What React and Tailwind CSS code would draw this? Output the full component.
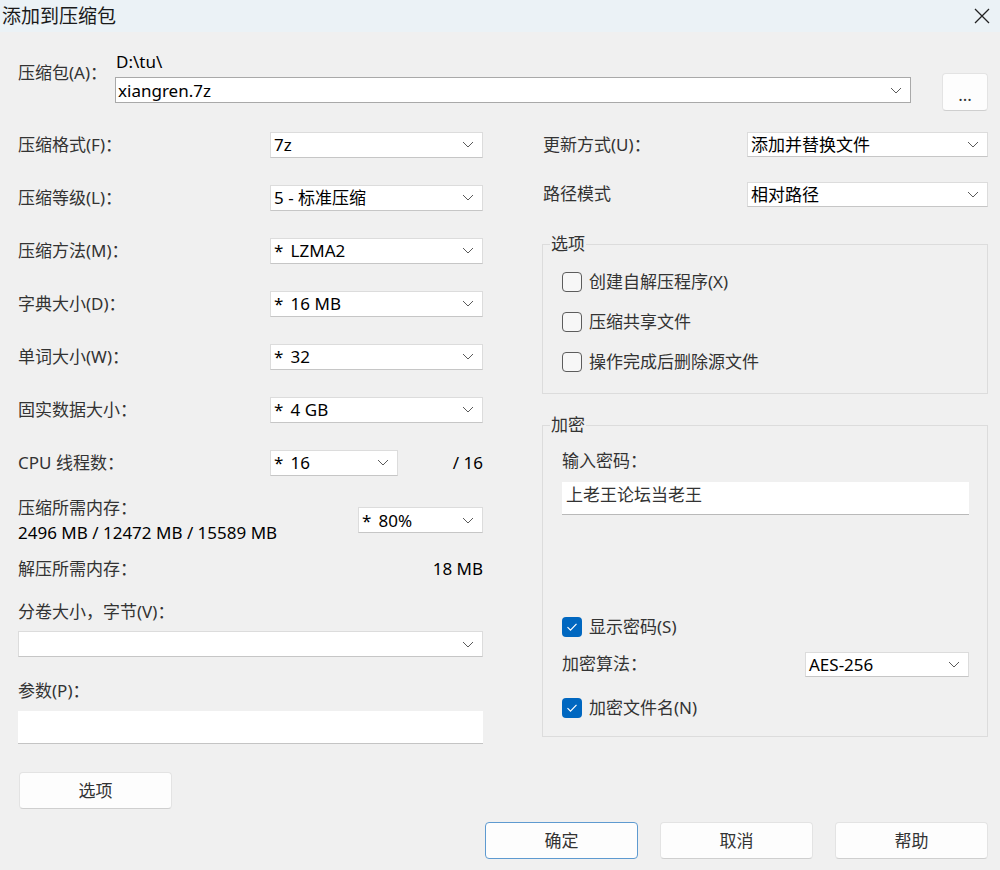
import React from 'react';

const FONT = { fontFamily: '"Noto Sans", "Noto Sans CJK SC", sans-serif' };

function Chevron() {
  return (
    <svg width="12" height="7" viewBox="0 0 12 7" className="shrink-0">
      <path d="M1 1l5 5 5-5" fill="none" stroke="#5a5a5a" strokeWidth="1" />
    </svg>
  );
}

function Combo({ value, className = '' }) {
  return (
    <div
      className={`flex items-center justify-between bg-white border border-[#dcdcdc] border-b-[#c6c6c6] pl-[3px] pr-[8px] ${className}`}
    >
      <span className="whitespace-pre text-black leading-none">{value}</span>
      <Chevron />
    </div>
  );
}

function Checkbox({ checked, label }) {
  return (
    <div className="flex items-center gap-[7px]">
      {checked ? (
        <span className="w-[20px] h-[20px] rounded-[4px] bg-[#0067c0] flex items-center justify-center">
          <svg width="12" height="10" viewBox="0 0 12 10">
            <path d="M1.5 5.2l3 3 6-6.4" fill="none" stroke="#fff" strokeWidth="1.2" />
          </svg>
        </span>
      ) : (
        <span className="w-[20px] h-[20px] rounded-[4px] border border-[#5c5c5c] bg-[#f7f7f7]" />
      )}
      <span className="text-[#333] leading-[24px]">{label}</span>
    </div>
  );
}

function Button({ children, primary, className = '' }) {
  return (
    <button
      className={`h-[37px] w-[153px] rounded-[4px] bg-[#fdfdfd] text-[#333] ${
        primary ? 'border-[1.5px] border-[#5e9ad0]' : 'border border-[#e3e3e3] border-b-[#cfcfcf]'
      } ${className}`}
    >
      {children}
    </button>
  );
}

function Row({ label, value }) {
  return (
    <div className="h-[53px] flex items-center justify-between">
      <span className="text-[#333]">{label}</span>
      <Combo value={value} className="w-[213px] h-[26px]" />
    </div>
  );
}

export default function App() {
  const rows = [
    ['压缩格式(F)：', '7z'],
    ['压缩等级(L)：', '5 - 标准压缩'],
    ['压缩方法(M)：', '* \u2009LZMA2'],
    ['字典大小(D)：', '* \u200916 MB'],
    ['单词大小(W)：', '* \u200932'],
    ['固实数据大小：', '* \u20094 GB'],
  ];

  return (
    <div className="w-[1000px] h-[870px] bg-[#f0f0f0] text-[17px] overflow-hidden" style={FONT}>
      {/* title bar */}
      <div className="h-[32px] bg-[#ebf2f6] flex items-center justify-between pl-[2px] pr-[10px]">
        <span className="text-[19px] text-[#1a1a1a] leading-none">添加到压缩包</span>
        <svg width="16" height="16" viewBox="0 0 16 16">
          <path d="M1 1l14 14M15 1L1 15" stroke="#222" strokeWidth="1.3" />
        </svg>
      </div>

      <div className="pl-[18px] pr-[12px]">
        {/* archive path */}
        <div className="flex items-start pt-[19px]">
          <span className="w-[97px] mt-[10px] leading-[24px] text-[#333]">压缩包(A)：</span>
          <div className="w-[796px]">
            <div className="leading-[22px] pl-[1px] text-black">D:\tu\</div>
            <div className="mt-[4px] h-[26px] bg-white border border-[#a9a9a9] flex items-center justify-between pl-[2px] pr-[8px]">
              <span className="text-black leading-none">xiangren.7z</span>
              <Chevron />
            </div>
          </div>
          <button className="ml-[31px] mt-[22px] w-[46px] h-[38px] rounded-[4px] bg-[#fdfdfd] border border-[#e3e3e3] border-b-[#cfcfcf] text-[#333] leading-none pt-[4px]">
            ...
          </button>
        </div>

        <div className="flex mt-[7px]">
          {/* left column */}
          <div className="w-[465px] flex flex-col">
            {rows.map(([l, v]) => (
              <Row key={l} label={l} value={v} />
            ))}

            <div className="h-[53px] flex items-center">
              <span className="w-[252px] text-[#333]">CPU 线程数：</span>
              <Combo value={'* \u200916'} className="w-[128px] h-[26px]" />
              <span className="ml-auto text-black">/ 16</span>
            </div>

            <div className="mt-[6px] h-[50px] flex items-center">
              <div className="leading-[25px]">
                <div className="text-[#333]">压缩所需内存：</div>
                <div className="text-black">2496 MB / 12472 MB / 15589 MB</div>
              </div>
              <Combo value={'* \u200980%'} className="ml-auto w-[125px] h-[26px]" />
            </div>

            <div className="mt-[11px] h-[25px] flex items-center justify-between">
              <span className="text-[#333]">解压所需内存：</span>
              <span className="text-black">18 MB</span>
            </div>

            <div className="mt-[18px] leading-[25px] text-[#333]">分卷大小，字节(V)：</div>
            <Combo value="" className="mt-[7px] h-[26px] w-full border-[#b5b5b5]" />

            <div className="mt-[21px] leading-[25px] text-[#333]">参数(P)：</div>
            <div className="mt-[8px] h-[33px] bg-white border-b border-[#c4c4c4]" />

            <Button className="mt-[28px] ml-[1px]">选项</Button>
          </div>

          {/* right column */}
          <div className="ml-[59px] w-[446px] flex flex-col">
            <div className="h-[53px] flex items-center pl-[1px]">
              <span className="text-[#333]">更新方式(U)：</span>
              <Combo value="添加并替换文件" className="ml-auto w-[241px] h-[25px]" />
            </div>
            <div className="h-[46px] flex items-center pl-[1px]">
              <span className="text-[#333]">路径模式</span>
              <Combo value="相对路径" className="ml-auto w-[241px] h-[25px]" />
            </div>

            <fieldset className="mt-[15px] border border-[#dcdcdc]">
              <legend className="ml-[7px] px-[1px] leading-[24px] text-[#333]">选项</legend>
              <div className="pl-[19px] pt-[6px] pb-[11px]">
                <div className="h-[40px] flex items-center">
                  <Checkbox label="创建自解压程序(X)" />
                </div>
                <div className="h-[40px] flex items-center">
                  <Checkbox label="压缩共享文件" />
                </div>
                <div className="h-[40px] flex items-center">
                  <Checkbox label="操作完成后删除源文件" />
                </div>
              </div>
            </fieldset>

            <fieldset className="mt-[19px] border border-[#dcdcdc]">
              <legend className="ml-[7px] px-[1px] leading-[24px] text-[#333]">加密</legend>
              <div className="pl-[19px] pr-[18px] pb-[5px]">
                <div className="mt-[12px] leading-[24px] text-[#333]">输入密码：</div>
                <div className="mt-[9px] h-[33px] bg-white border-b border-[#b9b9b9] pl-[4px] pt-[1px] leading-[24px] text-[#333]">
                  上老王论坛当老王
                </div>
                <div className="mt-[96px] h-[32px] flex items-center">
                  <Checkbox checked label="显示密码(S)" />
                </div>
                <div className="h-[42px] flex items-center">
                  <span className="text-[#333]">加密算法：</span>
                  <Combo value="AES-256" className="ml-auto w-[164px] h-[25px]" />
                </div>
                <div className="h-[46px] flex items-center">
                  <Checkbox checked label="加密文件名(N)" />
                </div>
              </div>
            </fieldset>
          </div>
        </div>

        {/* dialog buttons */}
        <div className="mt-[13px] flex justify-end gap-[22px]">
          <Button primary>确定</Button>
          <Button>取消</Button>
          <Button>帮助</Button>
        </div>
      </div>
    </div>
  );
}
